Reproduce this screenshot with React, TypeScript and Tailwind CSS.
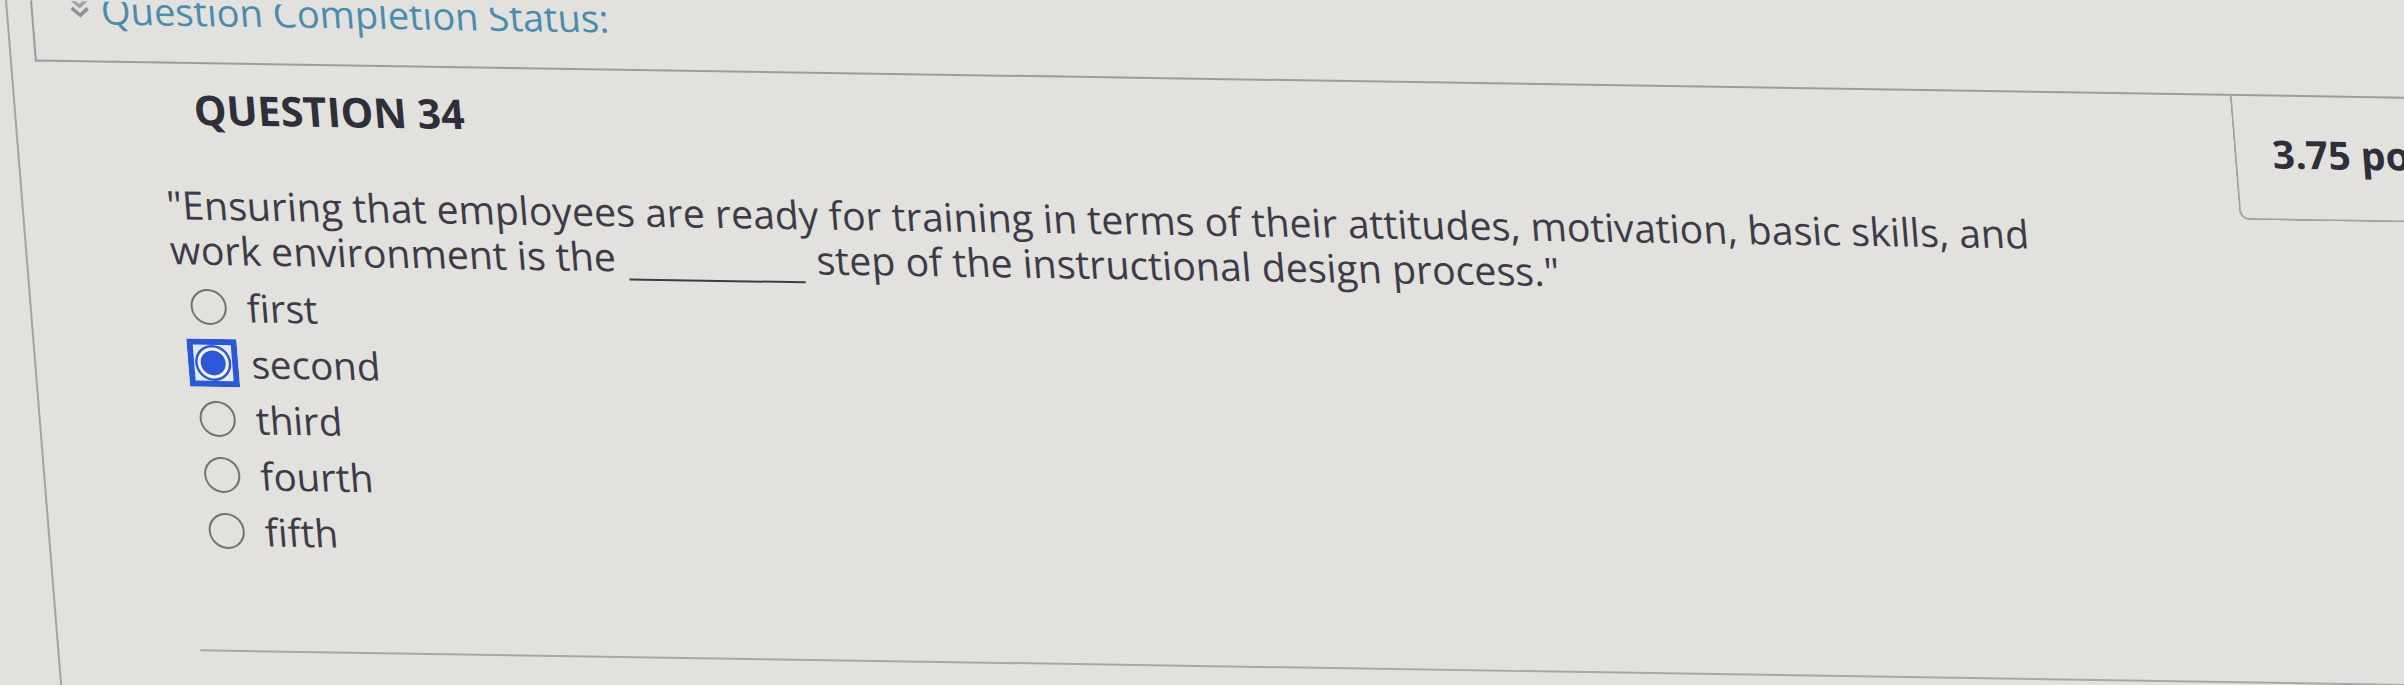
import React from 'react';

const options = ['first', 'second', 'third', 'fourth', 'fifth'];

function Radio({ checked }: { checked: boolean }) {
  if (checked) {
    return (
      <svg width="50" height="48" viewBox="0 0 50 48">
        <rect x="0" y="0" width="50" height="48" fill="#2b59d6" />
        <rect x="6" y="6" width="38" height="36" fill="#e4e9f1" />
        <circle cx="25" cy="24" r="18" fill="#2b59d6" />
        <circle cx="25" cy="24" r="15.5" fill="#f3f5f9" />
        <circle cx="25" cy="24" r="12.5" fill="#2b59d6" />
      </svg>
    );
  }
  return <div className="w-[36px] h-[36px] rounded-full border-[2.5px] border-[#727174]" />;
}

export default function App() {
  return (
    <div className="w-[2404px] h-[685px] overflow-hidden bg-[#e2e1dd] font-['Open_Sans',sans-serif]">
      {/* the photo is taken at a slight angle, so the page is skewed to match */}
      <div className="w-[2480px] h-[720px] origin-top-left skew-x-[4.6deg] skew-y-[0.9deg]">
        <div className="ml-[5px] h-full border-l-2 border-[#a3a3a6] flex flex-col">
          {/* completion status bar */}
          <div className="ml-[23px] h-[61px] border-l-2 border-b-2 border-[#9c9b9f] flex items-start pl-[36px] gap-[10px] overflow-hidden">
            <svg width="22" height="26" viewBox="0 0 22 26" className="mt-[-6px] shrink-0">
              <polyline points="3,4 11,11 19,4" fill="none" stroke="#a3a2a6" strokeWidth="3.5" />
              <polyline points="3,13 11,20 19,13" fill="none" stroke="#8f8e93" strokeWidth="3.5" />
            </svg>
            <span className="mt-[-12px] text-[38px] leading-[40px] text-[#4a8cae] whitespace-nowrap">
              Question Completion Status:
            </span>
          </div>

          <div className="flex">
            <div className="w-[2215px] shrink-0 flex flex-col">
              <h2 className="ml-[178px] pt-[24px] text-[41px] leading-[42px] font-bold text-[#2f2e3b]">QUESTION 34</h2>

              <p className="ml-[143px] mt-[52px] text-[39.2px] leading-[45px] text-[#3d3b4a] whitespace-nowrap">
                "Ensuring that employees are ready for training in terms of their attitudes, motivation, basic skills, and
                <br />
                work environment is the{' '}
                <span className="inline-block w-[176px] h-[2px] bg-[#3d3b4a] align-[-9px] mx-[2px]" /> step of the
                instructional design process."
              </p>

              <div className="ml-[152px] mt-[5px] flex flex-col">
                {options.map((o) => (
                  <label key={o} className="h-[56px] flex items-center gap-[13px]">
                    <span className="w-[50px] flex items-center justify-center">
                      <Radio checked={o === 'second'} />
                    </span>
                    <span className="text-[38.5px] leading-[56px] text-[#3d3b4a]">{o}</span>
                  </label>
                ))}
              </div>

              <div className="ml-[141px] mt-[91px] border-t-2 border-[#a7a6a9] w-[2400px]" />
            </div>

            <div className="w-[260px] h-[124px] shrink-0 border-l-2 border-b-2 border-[#a2a1a5] rounded-bl-[10px] pl-[36px] pt-[37px]">
              <span className="text-[39px] leading-[39px] font-bold text-[#2f2e3b] whitespace-nowrap">3.75 points</span>
            </div>
          </div>
        </div>
      </div>
    </div>
  );
}
